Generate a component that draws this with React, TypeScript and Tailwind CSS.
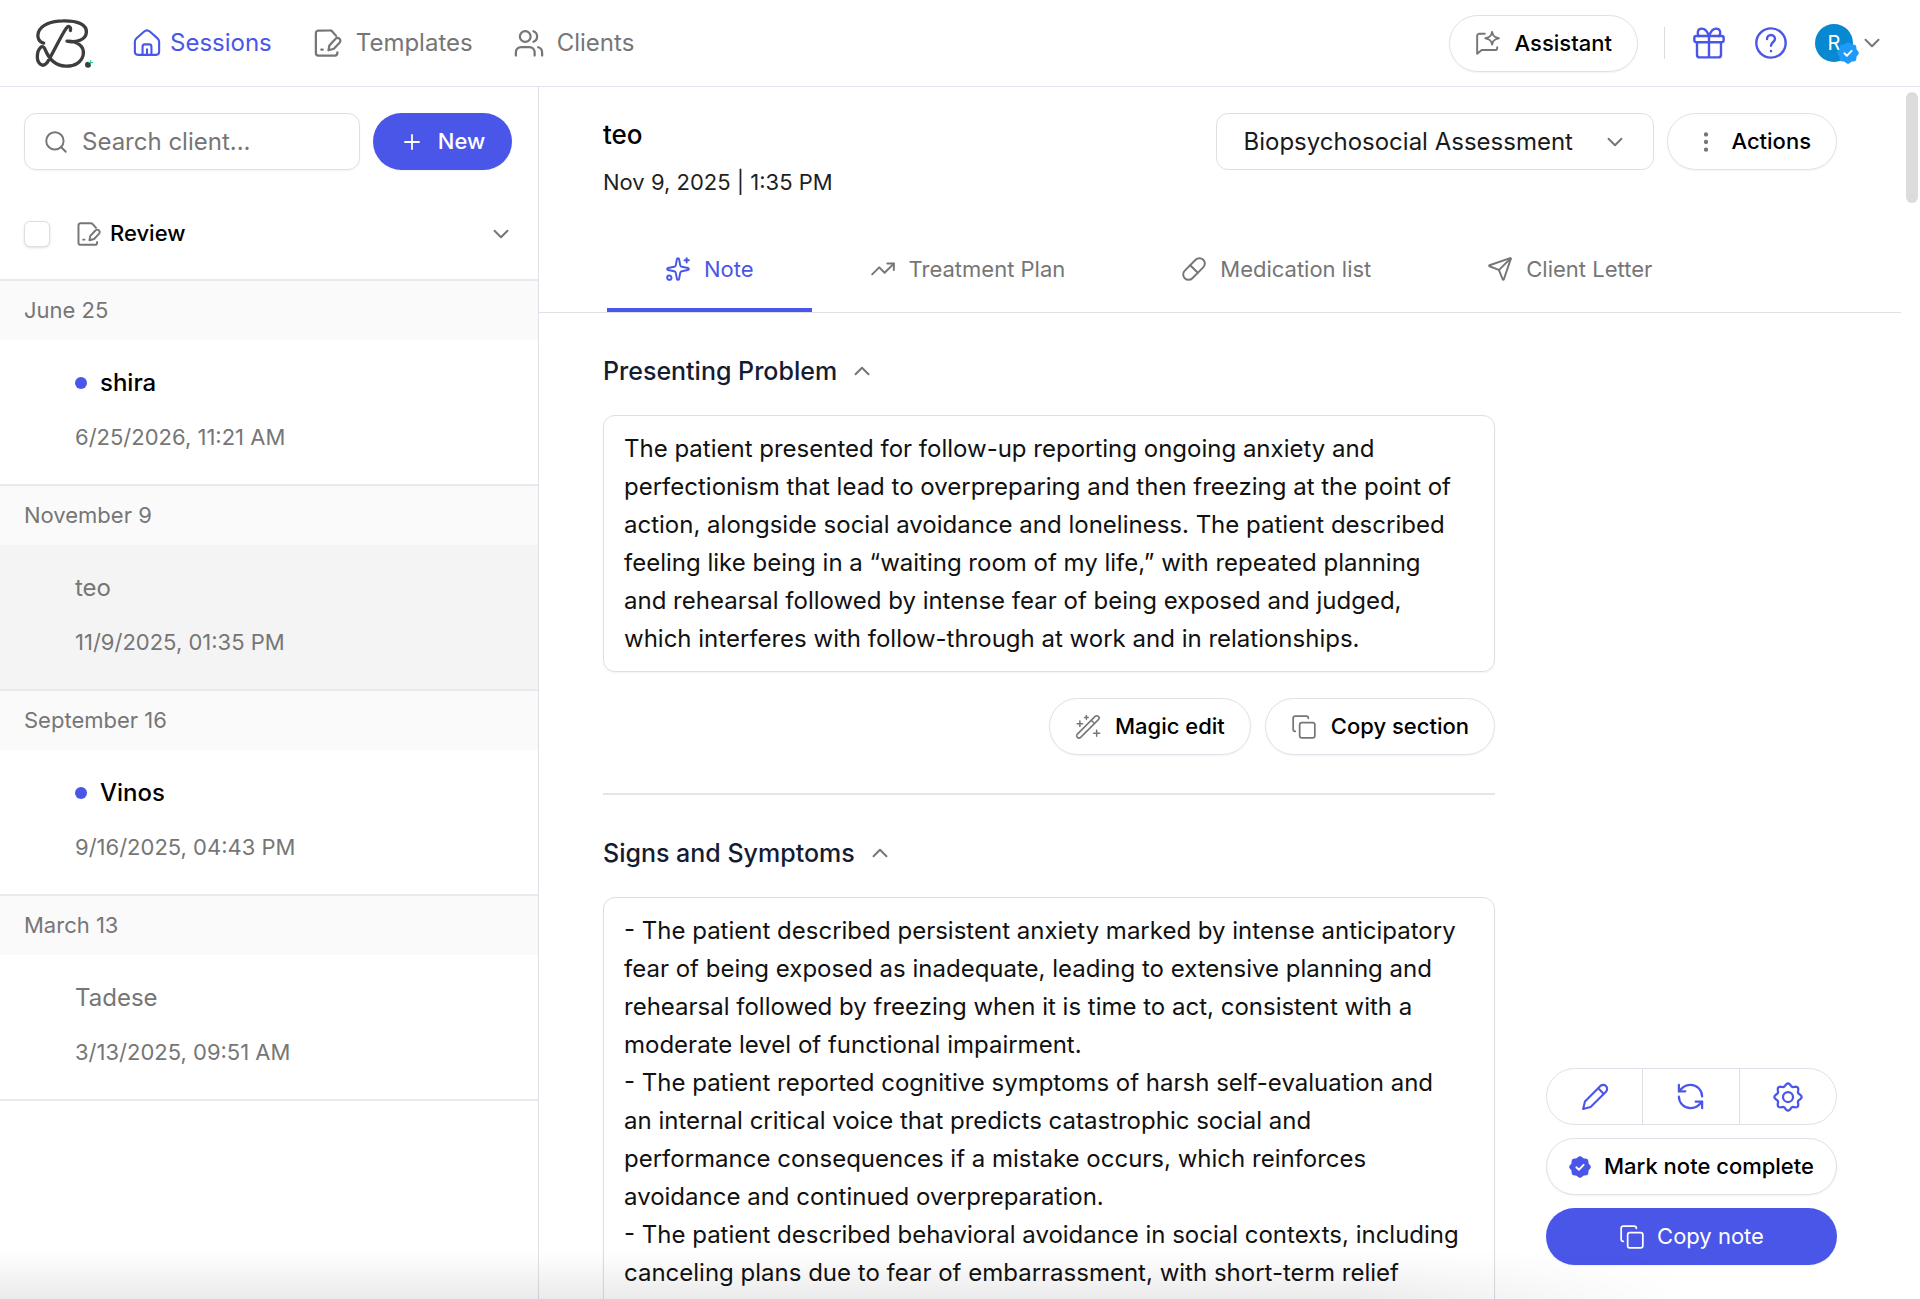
import type { ReactNode } from 'react';
import {
  ChevronDown,
  ChevronUp,
  Copy,
  EllipsisVertical,
  Pill,
  Plus,
  RefreshCcw,
  Search,
  Send,
  Sparkles,
  TrendingUp,
} from 'lucide-react';

const sessions = [
  { group: 'June 25', name: 'shira', date: '6/25/2026, 11:21 AM', unread: true, active: false },
  { group: 'November 9', name: 'teo', date: '11/9/2025, 01:35 PM', unread: false, active: true },
  { group: 'September 16', name: 'Vinos', date: '9/16/2025, 04:43 PM', unread: true, active: false },
  { group: 'March 13', name: 'Tadese', date: '3/13/2025, 09:51 AM', unread: false, active: false },
];

const sections = [
  {
    id: 'presenting',
    title: 'Presenting Problem',
    rows: 6,
    text: 'The patient presented for follow-up reporting ongoing anxiety and perfectionism that lead to overpreparing and then freezing at the point of action, alongside social avoidance and loneliness. The patient described feeling like being in a “waiting room of my life,” with repeated planning and rehearsal followed by intense fear of being exposed and judged, which interferes with follow-through at work and in relationships.',
  },
  {
    id: 'signs',
    title: 'Signs and Symptoms',
    rows: 14,
    text: `- The patient described persistent anxiety marked by intense anticipatory fear of being exposed as inadequate, leading to extensive planning and rehearsal followed by freezing when it is time to act, consistent with a moderate level of functional impairment.
- The patient reported cognitive symptoms of harsh self-evaluation and an internal critical voice that predicts catastrophic social and performance consequences if a mistake occurs, which reinforces avoidance and continued overpreparation.
- The patient described behavioral avoidance in social contexts, including canceling plans due to fear of embarrassment, with short-term relief`,
  },
];

const tabs = [
  { label: 'Note', icon: Sparkles, active: true },
  { label: 'Treatment Plan', icon: TrendingUp, active: false },
  { label: 'Medication list', icon: Pill, active: false },
  { label: 'Client Letter', icon: Send, active: false },
];

// closed outline with eight rounded bumps, used by the gear and the badges
function scallop(radius: number, depth: number) {
  const points: string[] = [];
  for (let i = 0; i < 96; i++) {
    const angle = (i / 96) * Math.PI * 2;
    const r = radius + depth * Math.cos(angle * 8);
    points.push(`${(12 + r * Math.cos(angle)).toFixed(2)} ${(12 + r * Math.sin(angle)).toFixed(2)}`);
  }
  return `M${points.join('L')}Z`;
}

function Icon({ className, children }: { className: string; children: ReactNode }) {
  return (
    <svg
      viewBox="0 0 24 24"
      fill="none"
      stroke="currentColor"
      strokeWidth="1.8"
      strokeLinecap="round"
      strokeLinejoin="round"
      aria-hidden="true"
      className={className}
    >
      {children}
    </svg>
  );
}

function Logo() {
  return (
    <svg viewBox="46 22 180 152" fill="none" aria-hidden="true" className="h-[51px] w-[60px]">
      <path
        d="M72 97C58 94 51 80 56 65C64 42 96 30 130 30C172 29 203 40 200 66C198 86 170 97 142 91C172 90 194 106 191 130C188 154 164 167 138 166C106 165 88 146 76 115C70 98 53 112 53 138C53 160 70 171 82 156C100 128 122 78 140 52C147 43 155 48 152 59"
        stroke="#3d3d3d"
        strokeWidth="10"
        strokeLinecap="round"
        strokeLinejoin="round"
      />
      <circle cx="205" cy="162" r="9" fill="#3d3d3d" />
      <path d="M213 148v14M206 155h14" stroke="#34c78a" strokeWidth="3" />
    </svg>
  );
}

function TemplateIcon({ className }: { className: string }) {
  return (
    <Icon className={className}>
      <path d="M18.5 6.3L15.4 2.8A2.4 2.4 0 0 0 13.6 2H4.3a2 2 0 0 0-2 2v16a2 2 0 0 0 2 2H17.5a2 2 0 0 0 2-2v-.6" />
      <path d="M6.6 17.2h1.2" />
      <path d="M12.4 17.8l.7-3.800 4.800-5.200a2.200 2.200 0 0 1 3.500 2.800l-4.700 5z" />
    </Icon>
  );
}

function BadgeIcon({ className }: { className: string }) {
  return (
    <svg viewBox="0 0 24 24" aria-hidden="true" className={className}>
      <path d={scallop(11, 0.8)} fill="currentColor" />
      <path
        d="M8 12.3l2.8 2.7L16 9.6"
        fill="none"
        stroke="white"
        strokeWidth="2"
        strokeLinecap="round"
        strokeLinejoin="round"
      />
    </svg>
  );
}

function Header() {
  return (
    <header className="flex h-[87px] shrink-0 items-center justify-between border-b border-[#e0e4ec] pr-[35px] pl-[35px]">
      <div className="flex items-center">
        <a href="#home" aria-label="Home">
          <Logo />
        </a>
        <nav className="ml-[38px] flex items-center gap-[41px] text-2xl text-[#767676]">
          <a href="#sessions" className="flex items-center gap-[9px] text-[#4a56e8]">
            <Icon className="size-7">
              <path d="M1.6 11V19.6a2.6 2.6 0 0 0 2.6 2.6h15.6a2.600 2.600 0 0 0 2.600-2.600V11a4 4 0 0 0-1.400-3L14.400 2.200a3.600 3.600 0 0 0-4.800 0L3 8a4 4 0 0 0-1.400 3z" />
              <path d="M8.200 22v-6.800a2 2 0 0 1 2-2h3.600a2 2 0 0 1 2 2V22M12 17.500v4.500" />
            </Icon>
            Sessions
          </a>
          <a href="#templates" className="flex items-center gap-[13px]">
            <TemplateIcon className="size-[30px]" />
            Templates
          </a>
          <a href="#clients" className="flex items-center gap-[13px]">
            <Icon className="size-[30px]">
              <circle cx="9" cy="6.800" r="4.300" />
              <path d="M15.600 2.600a4.500 4.500 0 0 1 0 8.400" />
              <path d="M1.500 22v-2.600a4.200 4.200 0 0 1 4.200-4.200h6.600a4.200 4.200 0 0 1 4.200 4.200V22" />
              <path d="M19.400 15.400c2 .6 3.100 2.100 3.100 4.400V22" />
            </Icon>
            Clients
          </a>
        </nav>
      </div>

      <div className="flex items-center">
        <button
          type="button"
          className="flex h-[57px] items-center gap-3.5 rounded-full border border-[#e0e0e8] px-[25px] text-[22px] font-medium shadow-xs"
        >
          <Icon className="size-[26px] text-[#767676]">
            <path d="M9 3.500H4a2 2 0 0 0-2 2V22l4.200-3.500H18.500a2 2 0 0 0 2-2V16" />
            <path d="M15.800 1.800c.6 3.600 2 5 6.200 5.800-4.200.8-5.600 2.200-6.200 5.800-.6-3.600-2-5-6.200-5.800 4.200-.8 5.600-2.200 6.200-5.800z" />
          </Icon>
          Assistant
        </button>
        <span className="mx-[26px] h-8 w-px bg-[#dcdce2]" />
        <button type="button" aria-label="Rewards" className="mx-0.5 text-[#4a56e8]">
          <Icon className="size-8">
            <rect x="1" y="6.800" width="22" height="4.600" rx="1.400" />
            <path d="M3 11.400V20.800a2 2 0 0 0 2 2h14a2 2 0 0 0 2-2V11.400M12 6.800v16" />
            <path d="M12 6.800C10.800 3.200 9 1.200 6.600 1.200 3.400 1.200 2.800 4.600 4.400 6.800M12 6.800c1.200-3.600 3-5.600 5.400-5.600 3.200 0 3.800 3.400 2.200 5.600" />
          </Icon>
        </button>
        <button type="button" aria-label="Help" className="ml-7 text-[#4a56e8]">
          <Icon className="size-8">
            <circle cx="12" cy="12" r="11" />
            <path d="M9 9a3 3 0 0 1 6 0c0 2.200-3 2.400-3 5M12 18v.1" />
          </Icon>
        </button>
        <button type="button" aria-label="Account" className="ml-7 flex items-center gap-1.5">
          <span className="relative flex size-[38px] items-center justify-center rounded-full bg-[#0788d1] text-xl text-white">
            R
            <BadgeIcon className="absolute -right-1.5 -bottom-0.5 size-[22px] text-[#1e9bf8]" />
          </span>
          <ChevronDown className="size-[26px] text-[#767676]" strokeWidth={1.8} />
        </button>
      </div>
    </header>
  );
}

function Sidebar() {
  return (
    <aside className="flex w-[539px] shrink-0 flex-col border-r border-[#e0e0e8]">
      <div className="flex gap-[13px] px-6 pt-[26px]">
        <div className="flex h-[57px] w-[336px] items-center gap-[13px] rounded-xl border border-[#dfdfe3] px-[18px] shadow-xs">
          <Search className="size-[26px] text-[#767676]" strokeWidth={1.8} />
          <input
            type="text"
            aria-label="Search client"
            placeholder="Search client..."
            className="min-w-0 flex-1 text-2xl outline-none placeholder:text-[#767676]"
          />
        </div>
        <button
          type="button"
          className="flex h-[57px] w-[139px] items-center justify-center gap-3.5 rounded-full bg-[#4a56e8] text-[22px] font-medium text-white shadow-xs"
        >
          <Plus className="size-6" strokeWidth={1.8} />
          New
        </button>
      </div>

      <div className="mt-[18px] flex h-[93px] items-center border-b-2 border-[#e8e8ee] px-6">
        <input
          type="checkbox"
          aria-label="Select all"
          className="size-[26px] appearance-none rounded-md border border-[#dfdfe3] bg-white shadow-sm"
        />
        <button type="button" className="ml-[26px] flex flex-1 items-center gap-2 text-[22px] font-medium">
          <TemplateIcon className="size-[26px] text-[#767676]" />
          Review
          <ChevronDown className="ml-auto size-[26px] text-[#767676]" strokeWidth={1.8} />
        </button>
      </div>

      {sessions.map((session) => (
        <section key={session.group} className="border-b-2 border-[#e8e8ee] text-[#767676]">
          <h2 className="bg-[#fafafa] px-6 text-[22px] leading-[59px]">{session.group}</h2>
          <a
            href={`#${session.name}`}
            className={`flex h-36 flex-col justify-center gap-[18px] pb-1 pl-[75px] ${
              session.active ? 'bg-[#f4f4f4]' : 'bg-white'
            }`}
          >
            <span className={`flex items-center gap-[13px] text-2xl leading-9 ${session.unread ? 'font-medium text-black' : ''}`}>
              {session.unread && <span className="size-3 rounded-full bg-[#4a56e8]" />}
              {session.name}
            </span>
            <span className="text-[22px] leading-9">{session.date}</span>
          </a>
        </section>
      ))}
    </aside>
  );
}

function NoteSection({ id, title, rows, text }: { id: string; title: string; rows: number; text: string }) {
  return (
    <section className="border-b-2 border-[#e5e5e8] pt-10 pb-[38px]">
      <h2 className="text-[25px] leading-9 font-medium text-[#141c33]">
        <button type="button" className="flex items-center gap-3">
          <label htmlFor={id}>{title}</label>
          <ChevronUp className="size-[26px] text-[#767676]" strokeWidth={1.8} />
        </button>
      </h2>
      <textarea
        id={id}
        rows={rows}
        defaultValue={text}
        className="mt-[26px] block w-full resize-none overflow-hidden rounded-xl border border-[#dfdfe3] pt-3.5 pr-[30px] pb-[13px] pl-5 text-2xl leading-[38px] text-[#111] shadow-xs outline-none"
      />
      <div className="mt-[26px] flex justify-end gap-3.5">
        <button
          type="button"
          className="flex h-[57px] items-center gap-3.5 rounded-full border border-[#e0e0e8] px-[25px] text-[22px] font-medium shadow-xs"
        >
          <Icon className="size-[26px] text-[#767676]">
            <path d="M2.200 18.600L18.600 2.200a2 2 0 0 1 3 3L5.200 21.600a2 2 0 0 1-3-3zM15 5.800l3 3" strokeWidth="1.400" />
            <path d="M4.500 6.500v5M2 9h5M10.500 1.500v3.400M8.800 3.200h3.400M20 15v5.600M17.200 17.800h5.600" strokeWidth="1.400" />
          </Icon>
          Magic edit
        </button>
        <button
          type="button"
          className="flex h-[57px] items-center gap-3.5 rounded-full border border-[#e0e0e8] px-[25px] text-[22px] font-medium shadow-xs"
        >
          <Copy className="size-[26px] text-[#767676]" strokeWidth={1.6} />
          Copy section
        </button>
      </div>
    </section>
  );
}

function NotePanel() {
  return (
    <main className="relative flex min-w-0 flex-1">
      <div className="min-w-0 flex-1 overflow-hidden">
        <div className="flex justify-between px-16 pt-[26px]">
          <div>
            <h1 className="text-[26px] leading-[44px] font-medium">teo</h1>
            <p className="text-[22px] leading-[50px] text-[#1f1f1f]">Nov 9, 2025 | 1:35 PM</p>
          </div>
          <div className="flex items-start gap-[13px]">
            <div className="grid h-[57px] w-[438px] items-center">
              <select
                aria-label="Note template"
                className="col-start-1 row-start-1 h-full w-full appearance-none rounded-xl border border-[#dfdfe3] bg-white pr-14 pl-[26px] text-2xl text-[#1a1a1a]"
              >
                <option>Biopsychosocial Assessment</option>
              </select>
              <ChevronDown
                className="pointer-events-none col-start-1 row-start-1 mr-[26px] size-[26px] justify-self-end text-[#767676]"
                strokeWidth={1.8}
              />
            </div>
            <button
              type="button"
              className="flex h-[57px] items-center gap-3 rounded-full border border-[#e0e0e8] px-[25px] text-[22px] font-medium shadow-xs"
            >
              <EllipsisVertical className="size-[26px] text-[#767676]" />
              Actions
            </button>
          </div>
        </div>

        <div role="tablist" className="mt-[17px] flex border-b border-[#e0e0e8] px-[68px]">
          {tabs.map(({ label, icon: TabIcon, active }) => (
            <button
              key={label}
              type="button"
              role="tab"
              aria-selected={active}
              className={`flex h-[88px] items-center gap-[13px] border-b-4 px-[58px] pt-1.5 text-[22px] ${
                active ? 'border-[#4a56e8] text-[#4a56e8]' : 'border-transparent text-[#767676]'
              }`}
            >
              <TabIcon className="size-[26px]" strokeWidth={1.8} />
              {label}
            </button>
          ))}
        </div>

        <div className="mx-16 max-w-[892px]">
          {sections.map((section) => (
            <NoteSection key={section.id} {...section} />
          ))}
        </div>
      </div>

      <div className="flex w-[19px] shrink-0 justify-center pt-[5px] pl-0.5">
        <div className="h-[111px] w-3 rounded-full bg-[#dcdcdc]" />
      </div>

      <div className="absolute right-[83px] bottom-[34px] flex w-[291px] flex-col gap-[13px]">
        <div className="grid h-[57px] grid-cols-3 divide-x divide-[#e0e0e8] rounded-full border border-[#e0e0e8] bg-white text-[#4a56e8]">
          <button type="button" aria-label="Edit" className="flex items-center justify-center">
            <Icon className="size-7">
              <path d="M1.800 22.200l1.600-6.400L16.600 2.600a3.300 3.300 0 0 1 4.800 4.800L8.200 20.600zM14.800 4.600l4.600 4.600" />
            </Icon>
          </button>
          <button type="button" aria-label="Regenerate" className="flex items-center justify-center">
            <RefreshCcw className="size-[31px]" strokeWidth={1.7} />
          </button>
          <button type="button" aria-label="Settings" className="flex items-center justify-center">
            <Icon className="size-[30px]">
              <path d={scallop(9.8, 1.1)} />
              <circle cx="12" cy="12" r="4" />
            </Icon>
          </button>
        </div>
        <button
          type="button"
          className="flex h-[57px] items-center justify-center gap-[13px] rounded-full border border-[#e0e0e8] bg-white text-[22px] font-medium shadow-xs"
        >
          <BadgeIcon className="size-[22px] text-[#4a56e8]" />
          Mark note complete
        </button>
        <button
          type="button"
          className="flex h-[57px] items-center justify-center gap-3 rounded-full bg-[#4a56e8] text-[22px] text-white shadow-xs"
        >
          <Copy className="size-[26px]" strokeWidth={1.6} />
          Copy note
        </button>
      </div>
    </main>
  );
}

export default function App() {
  return (
    <div className="relative flex h-screen flex-col overflow-hidden bg-white font-['Inter',sans-serif] text-black">
      <Header />
      <div className="flex min-h-0 flex-1">
        <Sidebar />
        <NotePanel />
      </div>
      <div className="pointer-events-none absolute bottom-0 left-0 h-12 w-[88%] bg-linear-to-t from-black/8 to-transparent mask-r-from-80%" />
    </div>
  );
}
